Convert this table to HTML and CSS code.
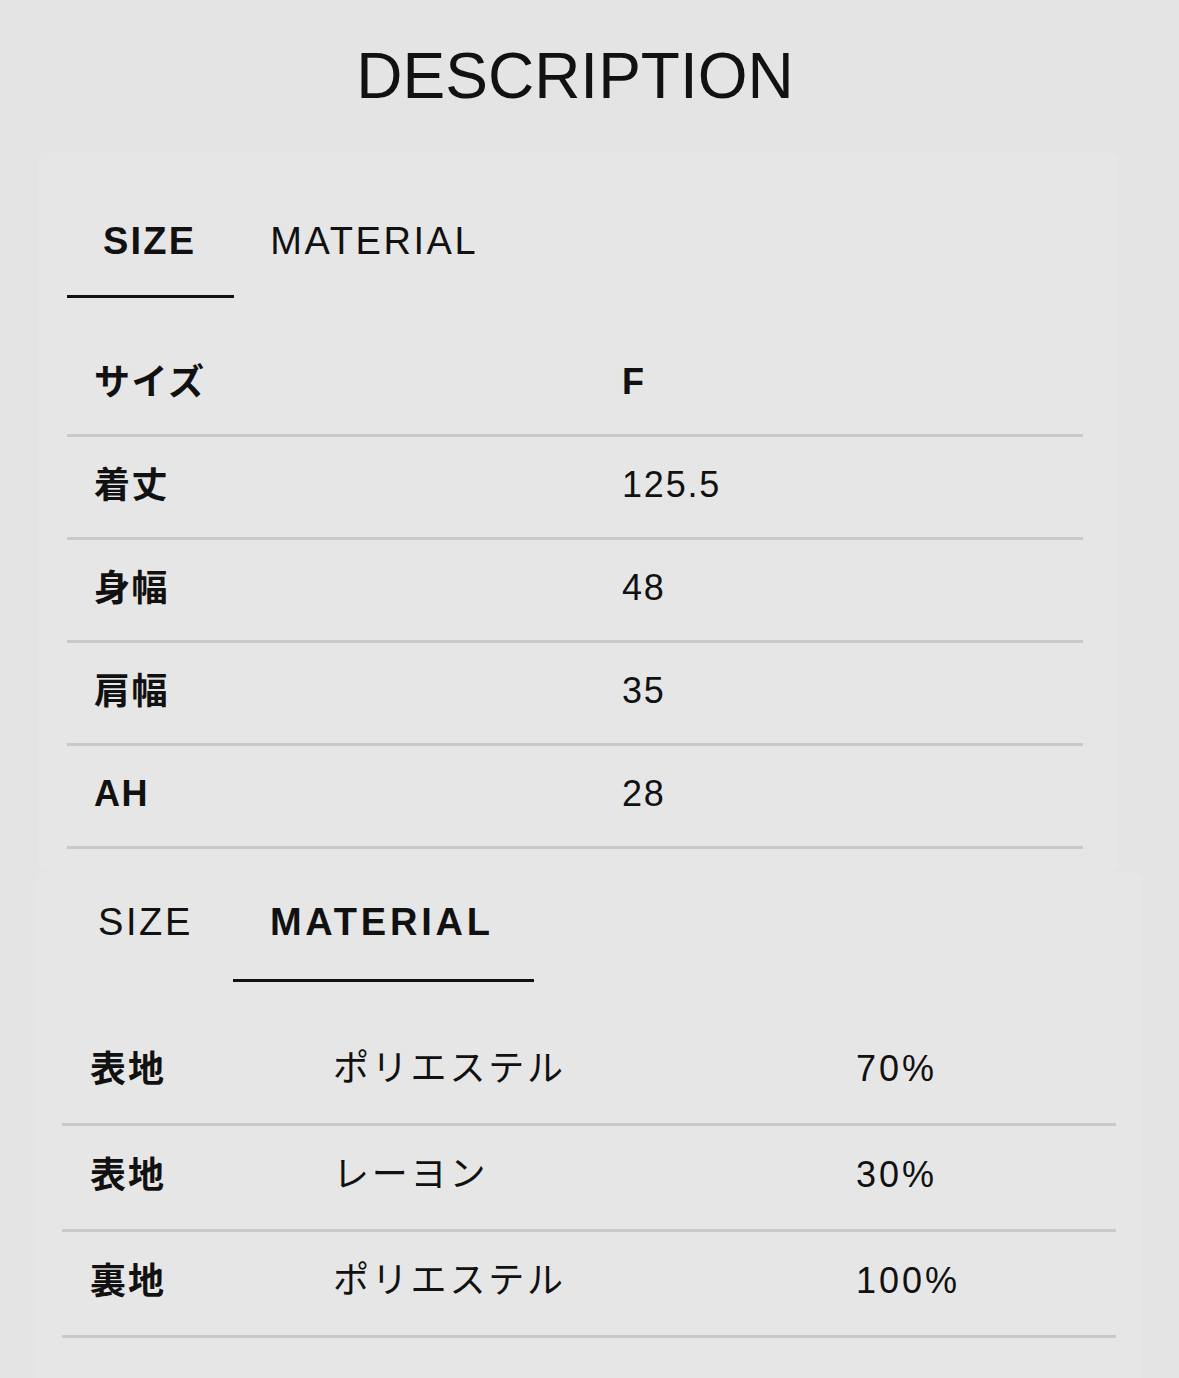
FILE: index.html
```html
<!DOCTYPE html>
<html lang="ja">
<head>
<meta charset="utf-8">
<link rel="stylesheet" href="styles.css">
</head>
<body>
<h1 class="heading">DESCRIPTION</h1>

<section class="panel panel-size">
  <div class="tabs">
    <div class="tab active">SIZE</div>
    <div class="tab">MATERIAL</div>
  </div>
  <div class="table size-table">
    <div class="row"><div class="c1 b jp">サイズ</div><div class="c2 b">F</div></div>
    <div class="row"><div class="c1 b jp">着丈</div><div class="c2">125.5</div></div>
    <div class="row"><div class="c1 b jp">身幅</div><div class="c2">48</div></div>
    <div class="row"><div class="c1 b jp">肩幅</div><div class="c2">35</div></div>
    <div class="row"><div class="c1 b">AH</div><div class="c2">28</div></div>
  </div>
</section>

<section class="panel panel-material">
  <div class="tabs">
    <div class="tab">SIZE</div>
    <div class="tab active">MATERIAL</div>
  </div>
  <div class="table material-table">
    <div class="row"><div class="m1 b jp">表地</div><div class="m2 jp">ポリエステル</div><div class="m3">70%</div></div>
    <div class="row"><div class="m1 b jp">表地</div><div class="m2 jp">レーヨン</div><div class="m3">30%</div></div>
    <div class="row"><div class="m1 b jp">裏地</div><div class="m2 jp">ポリエステル</div><div class="m3">100%</div></div>
  </div>
</section>
</body>
</html>
```

FILE: styles.css
```css
* { box-sizing: border-box; }
html, body { margin: 0; padding: 0; }
body {
  background: #e4e4e4;
  color: #111;
  font-family: "Liberation Sans", Arial, "Noto Sans CJK JP", sans-serif;
  width: 1179px;
  height: 1378px;
  overflow: hidden;
}
.heading {
  margin: 44px 0 0 67px;
  width: 1016px;
  height: 64px;
  font-size: 64px;
  line-height: 64px;
  font-weight: 400;
  text-align: center;
  letter-spacing: 0;
}
.panel {
  background: #e6e6e6;
  border-radius: 10px;
}
.panel-size {
  margin: 44px 0 0 38px;
  width: 1080px;
  padding: 70px 35px 0 29px;
  height: 720px;
}
.panel-material {
  margin: 0 0 0 35px;
  width: 1107px;
  padding: 31px 26px 0 27px;
  height: 520px;
}
.tabs {
  display: flex;
}
.tab {
  font-size: 38px;
  line-height: 38px;
  letter-spacing: 2.6px;
  padding: 0 38px 35px 36px;
  border-bottom: 3px solid transparent;
}
.panel-material .tab { padding-bottom: 38px; }
.panel-material .tab:first-child { padding-right: 40px; }
.panel-material .tab.active { padding-left: 37px; padding-right: 40px; }
.tab.active {
  font-weight: 700;
  border-bottom-color: #111;
  letter-spacing: 2.2px;
}
.panel-material .tab.active { letter-spacing: 3.8px; }
.table {
  margin-top: 36px;
}
.material-table { margin-top: 38px; }
.row {
  display: flex;
  align-items: center;
  height: 103px;
  padding-bottom: 4px;
  border-bottom: 3px solid #c9c9c9;
  font-size: 36px;
  letter-spacing: 1.5px;
}
.material-table .row { height: 106px; padding-bottom: 6px; }
.b { font-weight: 700; }
.jp {
  font-family: "Noto Sans CJK JP", "Liberation Sans", sans-serif;
  line-height: 1;
  padding-bottom: 6px;
}
.c1 { width: 555px; padding-left: 27px; }
.c2 { flex: 1; letter-spacing: 1.8px; }
.m1 { width: 271px; padding-left: 28px; letter-spacing: 2px; }
.m2 { width: 523px; letter-spacing: 2.8px; padding-bottom: 8px; }
.m3 { flex: 1; letter-spacing: 3px; }
```
